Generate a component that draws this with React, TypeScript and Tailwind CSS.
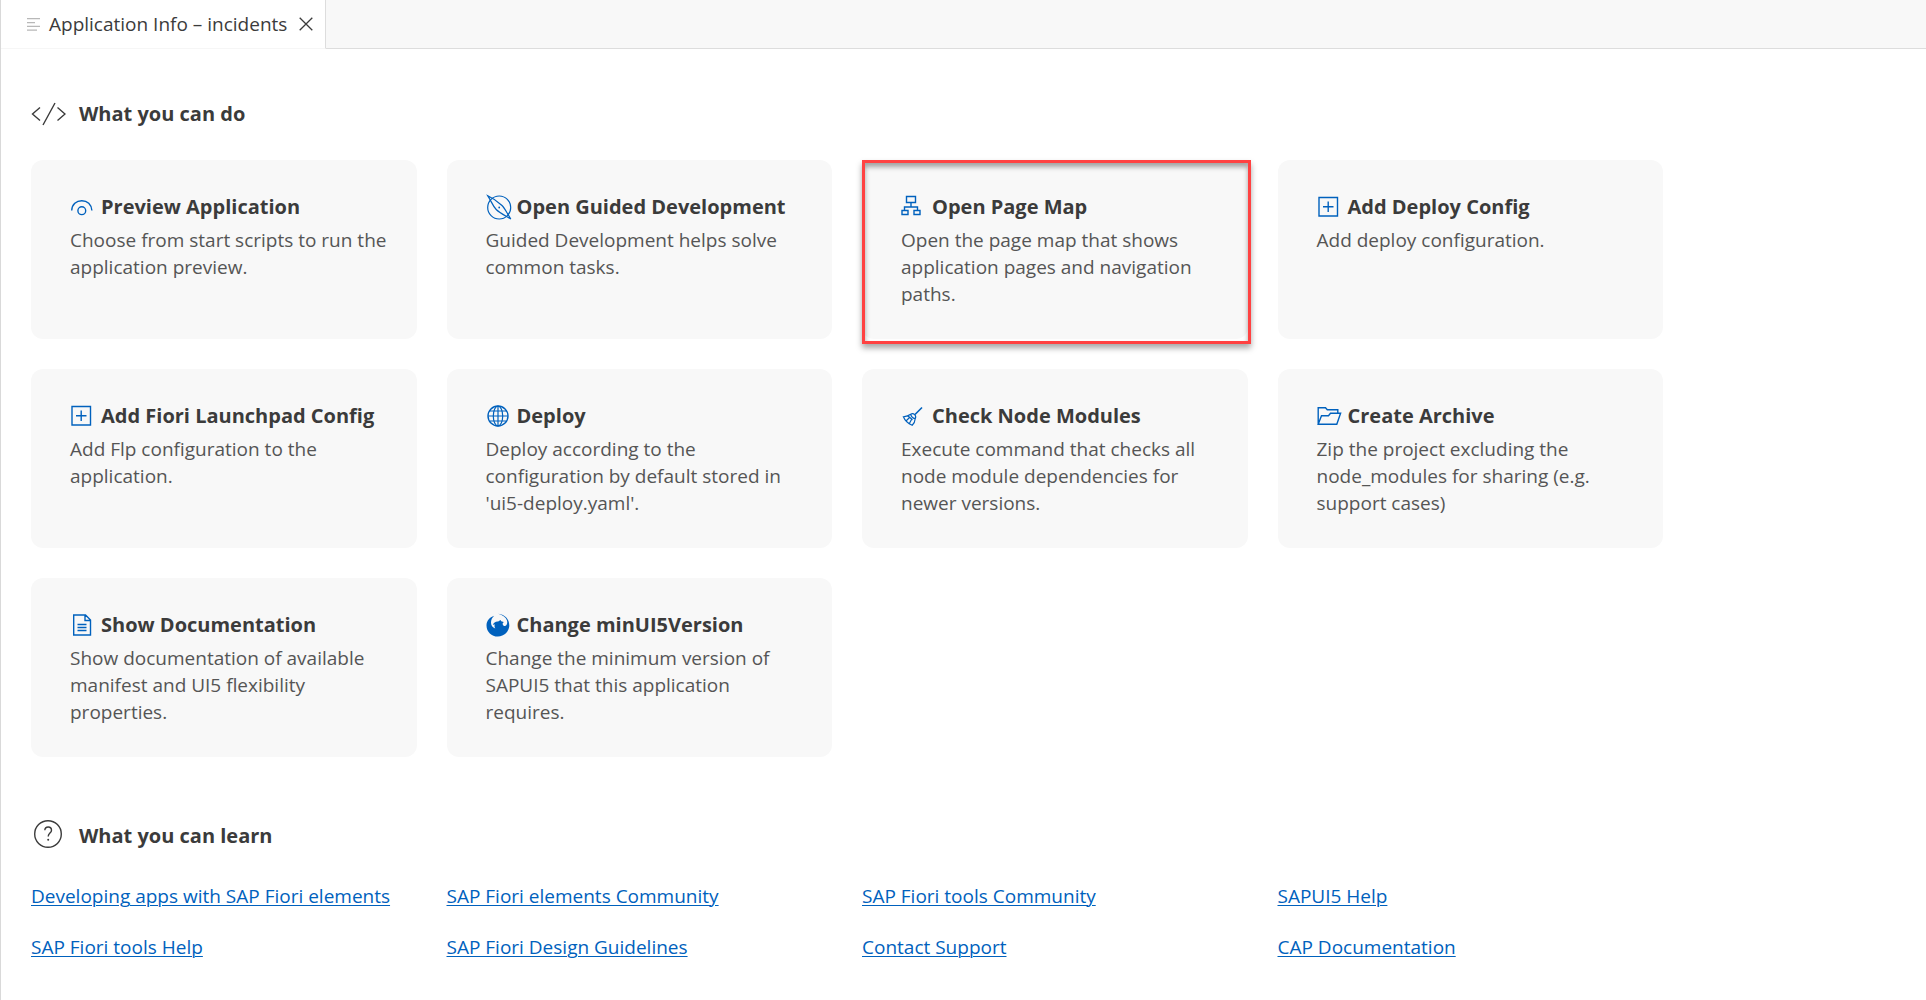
import type { ReactNode } from "react";

function Icon({ children }: { children: ReactNode }) {
  return (
    <svg
      viewBox="0 0 24 24"
      className="size-6 shrink-0 overflow-visible"
      fill="none"
      stroke="currentColor"
      strokeWidth="1.4"
      aria-hidden="true"
    >
      {children}
    </svg>
  );
}

const eye = (
  <Icon>
    <path d="M1.7 15.5C2 9.5 6.300 5.700 11.800 5.700S21.500 9.500 21.900 15.500" />
    <circle cx="11.800" cy="15.700" r="3.900" />
  </Icon>
);

const compass = (
  <Icon>
    <circle cx="13.200" cy="12.500" r="11.500" strokeWidth="1.200" />
    <path
      d="M1.800 .800C6.500 3 12 6.800 16 10.500C18.800 13.200 20.500 17.500 24.800 24C19 20.500 13.500 17.800 10.200 14.500C6.800 11 5.500 6.500 1.800 .800Z"
      strokeWidth="1.200"
    />
    <circle cx="13.200" cy="12.500" r=".9" fill="currentColor" stroke="none" />
  </Icon>
);

const pageMap = (
  <Icon>
    <path d="M5.500 1.500h9v6h-9zM10 7.500v4M3.500 15.500v-3.500h13v3.500M1 15.500h6v4h-6zM13 15.500h6v4h-6z" />
  </Icon>
);

const plusBox = (
  <Icon>
    <path d="M2 2.500h18.500v18.500h-18.500zM11.200 6.500v10.500M6 11.700h10.500" />
  </Icon>
);

const globe = (
  <Icon>
    <circle cx="12" cy="12" r="10" />
    <ellipse cx="12" cy="12" rx="4.700" ry="10" strokeWidth="1.200" />
    <path d="M12 2v20M2 12h20M3.700 7h16.600M3.700 17h16.600" strokeWidth="1.200" />
  </Icon>
);

const broom = (
  <Icon>
    <path d="M21 3.500L14 10.500" strokeWidth="1.600" />
    <path
      d="M9.700 10.200C11 9.300 12.700 9.700 13.700 10.700S15 13.200 14.200 14.800C14 17.500 13 19.700 11.200 21.300C8 20 4 16.800 2.400 12.800C4.700 12.500 7.500 11.800 9.700 10.200ZM9.700 10.200C10.200 12.800 11.800 14.300 14.200 14.800M5.500 16.500L8.800 13.300M8.500 19.300L10.500 15.500M7 12L11.500 15.800"
      strokeWidth="1.200"
    />
  </Icon>
);

const folder = (
  <Icon>
    <path
      d="M1.200 20.300V3.700H8.500L10.300 5.700H20.800V9.300M1.200 20.300L4.500 11.700H11.500L13.500 9.300H23.600L19.800 20.300Z"
      strokeWidth="1.400"
    />
  </Icon>
);

const documentIcon = (
  <Icon>
    <path d="M3.700 2h11.800l5 5v15H3.700zM15 2v5.500h5.500M7.500 11.500h9M7.500 14.500h9M7.500 17.500h9" />
  </Icon>
);

const phoenix = (
  <Icon>
    <path
      fill="currentColor"
      stroke="none"
      d="M12.300 .8C19 1.500 23.300 6.500 23.300 12.300C23.300 18.500 18.200 23.500 11.900 23.500S.5 18.700 .5 12.400C.5 8 3.500 4.200 8.200 2.800C6.200 4.500 4.900 7 5 9.600C5 12.500 6.500 14.700 9.300 15.400C8.300 13.900 8.300 12.700 8.900 11.600L6.800 11.800C7.600 9.600 9.800 8.300 12.200 8.600L14.500 6.900L15.200 8.300L17.700 9L16.500 10.800C17 12.700 18.200 13.400 19.200 13C20.900 12.300 21.700 10 21 7.500C19.900 4.300 17 2.300 12.300 .8Z"
    />
  </Icon>
);

interface Action {
  title: string;
  text: string;
  icon: ReactNode;
  highlighted?: boolean;
}

const actions: Action[] = [
  { title: "Preview Application", text: "Choose from start scripts to run the application preview.", icon: eye },
  { title: "Open Guided Development", text: "Guided Development helps solve common tasks.", icon: compass },
  {
    title: "Open Page Map",
    text: "Open the page map that shows application pages and navigation paths.",
    icon: pageMap,
    highlighted: true,
  },
  { title: "Add Deploy Config", text: "Add deploy configuration.", icon: plusBox },
  { title: "Add Fiori Launchpad Config", text: "Add Flp configuration to the application.", icon: plusBox },
  {
    title: "Deploy",
    text: "Deploy according to the configuration by default stored in 'ui5-deploy.yaml'.",
    icon: globe,
  },
  {
    title: "Check Node Modules",
    text: "Execute command that checks all node module dependencies for newer versions.",
    icon: broom,
  },
  {
    title: "Create Archive",
    text: "Zip the project excluding the node_modules for sharing (e.g. support cases)",
    icon: folder,
  },
  {
    title: "Show Documentation",
    text: "Show documentation of available manifest and UI5 flexibility properties.",
    icon: documentIcon,
  },
  {
    title: "Change minUI5Version",
    text: "Change the minimum version of SAPUI5 that this application requires.",
    icon: phoenix,
  },
];

const links = [
  "Developing apps with SAP Fiori elements",
  "SAP Fiori elements Community",
  "SAP Fiori tools Community",
  "SAPUI5 Help",
  "SAP Fiori tools Help",
  "SAP Fiori Design Guidelines",
  "Contact Support",
  "CAP Documentation",
];

function ActionCard({ title, text, icon, highlighted }: Action) {
  return (
    <button
      type="button"
      className="relative flex min-h-[179px] flex-col items-start rounded-xl bg-[#f8f8f8] pt-[33px] pr-[27px] pb-[31px] pl-[39px] text-left"
    >
      <span className="mb-[7px] flex items-center gap-[7px] text-[#0061bd]">
        {icon}
        <span className="text-[20px] leading-[27px] font-bold whitespace-nowrap text-[#3b3b3b]">{title}</span>
      </span>
      <span className="text-[19px] leading-[27px] text-[#555555]">{text}</span>
      {highlighted && (
        <span className="pointer-events-none absolute top-0 -right-[3px] -bottom-[5px] left-0 border-[3px] border-[#ff4242] shadow-[0_4px_6px_rgba(0,0,0,0.35),inset_0_4px_5px_rgba(0,0,0,0.35)]" />
      )}
    </button>
  );
}

export default function App() {
  return (
    <div className="min-h-screen border-l border-[#d9d9d9] bg-white font-['Segoe_UI','Open_Sans',sans-serif] text-[#3b3b3b]">
      <header className="flex h-[49px] bg-[#f8f8f8]" role="tablist">
        <div className="flex items-center border-r border-b border-r-[#dddddd] border-b-[#f6f6f6] bg-white pr-3 pl-[26px]">
          <svg viewBox="0 0 13 13" className="mr-[9px] size-[13px] shrink-0 text-[#b8b8b8]" fill="currentColor" aria-hidden="true">
            <path d="M0 0h13v1.300H0zM0 4h8v1.300H0zM0 7.700h13v1.300H0zM0 11.500h10v1.300H0z" />
          </svg>
          <button type="button" role="tab" aria-selected="true" className="text-[19px] leading-[27px] whitespace-nowrap">
            Application Info – incidents
          </button>
          <button type="button" aria-label="Close tab" className="ml-[11px] flex size-[15px] items-center justify-center">
            <svg viewBox="0 0 14 14" className="size-[14px]" fill="none" stroke="currentColor" strokeWidth="1.300">
              <path d="M.7.7l12.600 12.600M13.300.7L.7 13.300" />
            </svg>
          </button>
        </div>
        <div className="flex-1 border-b border-[#dddddd]" />
      </header>

      <main className="px-[30px] pt-[51px]">
        <div className="max-w-[1632px]">
          <section>
            <h2 className="flex items-center gap-[13px] text-[20px] leading-[27px] font-bold">
              <svg viewBox="0 0 35 24" className="h-6 w-[35px]" fill="none" stroke="currentColor" strokeWidth="1.400" aria-hidden="true">
                <path d="M9 5.500L1.500 12L9 18.500M26.500 5.500L34 12L26.500 18.500M24 1L12 23" />
              </svg>
              What you can do
            </h2>
            <div className="mt-[33px] grid grid-cols-4 gap-[30px]">
              {actions.map((action) => (
                <ActionCard key={action.title} {...action} />
              ))}
            </div>
          </section>

          <section className="mt-[63px]">
            <h2 className="flex items-center gap-[13px] text-[20px] leading-[27px] font-bold">
              <svg viewBox="0 0 35 30" className="h-[30px] w-[35px]" fill="none" stroke="currentColor" strokeWidth="1.400" aria-hidden="true">
                <circle cx="17" cy="14" r="13.300" />
                <path d="M13.800 10.300C13.900 8.300 15.200 7 17.200 7S20.500 8.300 20.500 10.200C20.500 13 17.200 13.300 17.200 16.500" />
                <circle cx="17.200" cy="19.700" r="1" fill="currentColor" stroke="none" />
              </svg>
              What you can learn
            </h2>
            <ul className="mt-[33px] grid grid-cols-4 gap-x-[30px] gap-y-6">
              {links.map((label) => (
                <li key={label}>
                  <a
                    href="#"
                    className="text-[19px] leading-[27px] whitespace-nowrap text-[#0061bd] underline decoration-1 underline-offset-2"
                  >
                    {label}
                  </a>
                </li>
              ))}
            </ul>
          </section>
        </div>
      </main>
    </div>
  );
}
